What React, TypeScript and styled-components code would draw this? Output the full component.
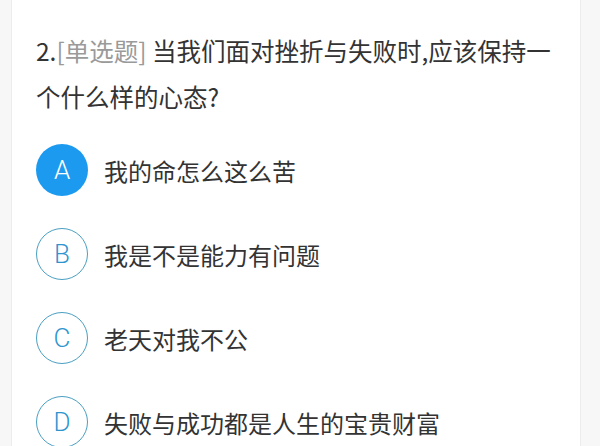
import React from 'react';
import styled, { createGlobalStyle } from 'styled-components';

const GlobalStyle = createGlobalStyle`
  html, body {
    margin: 0;
    padding: 0;
    background: #f7f7f7;
  }
  body {
    font-family: "Noto Sans CJK SC", "Noto Sans", sans-serif;
  }
`;

const options = [
  { key: 'A', text: '我的命怎么这么苦' },
  { key: 'B', text: '我是不是能力有问题' },
  { key: 'C', text: '老天对我不公' },
  { key: 'D', text: '失败与成功都是人生的宝贵财富' }
];

const App = () => {
  const selected = 'A';

  return (
    <>
      <GlobalStyle />
      <CardStyled>
        <QuestionStyled>
          2.<TagStyled>[单选题]</TagStyled> 当我们面对挫折与失败时,应该保持一个什么样的心态?
        </QuestionStyled>
        <OptionListStyled>
          {options.map((o) => (
            <OptionRowStyled key={o.key}>
              <LetterStyled active={o.key === selected}>{o.key}</LetterStyled>
              <OptionTextStyled>{o.text}</OptionTextStyled>
            </OptionRowStyled>
          ))}
        </OptionListStyled>
      </CardStyled>
    </>
  );
};

const CardStyled = styled.div`
  margin-left: 11px;
  width: 570px;
  min-height: 100vh;
  box-sizing: border-box;
  background: #fff;
  border-left: 1px solid #ececec;
  border-right: 1px solid #ececec;
  padding: 28px 24px 0 24px;
`;

const QuestionStyled = styled.div`
  font-size: 24.5px;
  line-height: 46px;
  color: #333;
`;

const TagStyled = styled.span`
  color: #9a9a9a;
`;

const OptionListStyled = styled.div`
  display: flex;
  flex-direction: column;
  margin-top: 8px;
`;

const OptionRowStyled = styled.div`
  display: flex;
  align-items: center;
  gap: 16px;
  height: 84px;
`;

const LetterStyled = styled.div<{ active?: boolean }>`
  width: 52px;
  height: 52px;
  flex-shrink: 0;
  box-sizing: border-box;
  border-radius: 50%;
  display: flex;
  align-items: center;
  justify-content: center;
  font-family: Roboto, "Noto Sans", sans-serif;
  font-weight: 300;
  font-size: 26px;
  background: ${(p) => (p.active ? '#1b9af0' : '#fff')};
  color: ${(p) => (p.active ? '#fff' : '#2f95cf')};
  border: ${(p) => (p.active ? 'none' : '1.6px solid #4a9fc2')};
`;

const OptionTextStyled = styled.div`
  font-size: 24px;
  color: #333;
`;

export default App;
